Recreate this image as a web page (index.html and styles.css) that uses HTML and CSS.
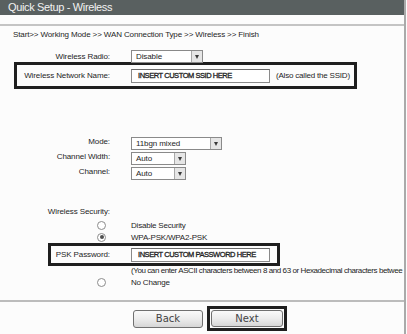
FILE: index.html
```html
<!DOCTYPE html>
<html>
<head>
<meta charset="utf-8">
<link rel="stylesheet" href="styles.css">
</head>
<body>
<div class="page">
  <div class="title">Quick Setup - Wireless</div>
  <div class="sep"></div>
  <p class="crumbs">Start&gt;&gt; Working Mode &gt;&gt; WAN Connection Type &gt;&gt; Wireless &gt;&gt; Finish</p>

  <div class="row r-radio">
    <span class="label">Wireless Radio:</span>
    <span class="select w72"><span class="val">Disable</span><span class="arrow"></span></span>
  </div>

  <div class="hl hl-ssid">
    <span class="label">Wireless Network Name:</span>
    <span class="input">INSERT CUSTOM SSID HERE</span>
    <span class="note">(Also called the SSID)</span>
  </div>

  <div class="row r-mode">
    <span class="label">Mode:</span>
    <span class="select w91"><span class="val">11bgn mixed</span><span class="arrow"></span></span>
  </div>
  <div class="row r-sel">
    <span class="label">Channel Width:</span>
    <span class="select w55"><span class="val">Auto</span><span class="arrow"></span></span>
  </div>
  <div class="row r-sel">
    <span class="label">Channel:</span>
    <span class="select w55"><span class="val">Auto</span><span class="arrow"></span></span>
  </div>

  <div class="row r-sec">
    <span class="label">Wireless Security:</span>
  </div>
  <div class="row r-opt first">
    <span class="label"><span class="radio"></span></span>
    <span class="text">Disable Security</span>
  </div>
  <div class="row r-opt">
    <span class="label"><span class="radio on"></span></span>
    <span class="text">WPA-PSK/WPA2-PSK</span>
  </div>

  <div class="hl hl-psk">
    <span class="label">PSK Password:</span>
    <span class="input">INSERT CUSTOM PASSWORD HERE</span>
  </div>
  <div class="row r-hint">
    <span class="label"></span>
    <span class="text hint">(You can enter ASCII characters between 8 and 63 or Hexadecimal characters betwee</span>
  </div>
  <div class="row r-opt nc">
    <span class="label"><span class="radio"></span></span>
    <span class="text">No Change</span>
  </div>

  <div class="rule"></div>

  <div class="buttons">
    <span class="btn back">Back</span>
    <span class="focus"><span class="btn next">Next</span></span>
  </div>
</div>
</body>
</html>
```
FILE: styles.css
```css
* { box-sizing: border-box; margin: 0; padding: 0; }
html, body { margin: 0; background: #fcfcfc; }
body {
  font-family: "Liberation Sans", Arial, sans-serif;
  font-size: 8px;
  color: #1e1e1e;
}
.page {
  width: 406px;
  height: 334px;
  border-right: 2px solid #aaaaaa;
  overflow: hidden;
  background: #fcfcfc;
}
.title {
  height: 15px;
  background: #596060;
  color: #f2f2f2;
  font-family: "Liberation Sans", Arial, sans-serif;
  font-size: 11px;
  line-height: 15px;
  padding-left: 8px;
  letter-spacing: -0.35px;
}
.sep {
  height: 11px;
  border-bottom: 2px solid #c4c4c4;
}
.crumbs {
  height: 18px;
  line-height: 18px;
  padding-left: 13px;
  white-space: nowrap;
  letter-spacing: -0.12px;
}
.row {
  display: flex;
  align-items: center;
  white-space: nowrap;
}
.label {
  display: inline-flex;
  justify-content: flex-end;
  align-items: center;
  width: 110px;
  flex: none;
  letter-spacing: -0.1px;
}
.row .label + * { margin-left: 21px; }
.r-radio { margin-top: 6px; height: 12px; }
.select {
  display: inline-flex;
  height: 13px;
  border: 1px solid #8a8a8a;
  background: #fff;
  align-items: stretch;
}
.select .val {
  flex: 1;
  padding-left: 4px;
  line-height: 11px;
  letter-spacing: -0.1px;
}
.select .arrow {
  width: 11px;
  border-left: 1px solid #a8a8a8;
  background: #e6e6e6;
  position: relative;
}
.select .arrow::after {
  content: "";
  position: absolute;
  left: 3px;
  top: 4px;
  border-left: 2.5px solid transparent;
  border-right: 2.5px solid transparent;
  border-top: 4px solid #3a3a3a;
}
.w72 { width: 72px; }
.w91 { width: 91px; }
.w55 { width: 55px; }

.hl {
  display: flex;
  align-items: center;
  border: 3px solid #1f1f1f;
  white-space: nowrap;
}
.hl-ssid {
  margin-left: 14px;
  width: 343px;
  height: 27px;
}
.hl-ssid .label { width: 93px; }
.hl-psk {
  margin-left: 48px;
  width: 232px;
  height: 23px;
}
.hl-psk .label { width: 59px; }
.hl .input { margin-left: 21px; }
.input {
  display: inline-block;
  width: 139px;
  height: 14px;
  border: 1px solid #8a8a8a;
  border-top-color: #6a6a6a;
  background: #fff;
  padding-left: 6px;
  line-height: 12px;
  font-size: 7.5px;
  letter-spacing: -0.45px;
  -webkit-text-stroke: 0.3px #1e1e1e;
  color: #1e1e1e;
}
.note {
  margin-left: 6px;
  letter-spacing: -0.2px;
}
.r-mode { margin-top: 48px; height: 15px; align-items: flex-start; }
.r-sel { height: 15px; align-items: flex-start; }
.r-sec { margin-top: 23px; height: 12px; }
.r-opt { height: 12px; }
.r-opt.first { margin-top: 2px; }
.r-opt .label { padding-right: 4px; }
.radio {
  display: inline-block;
  width: 9px;
  height: 9px;
  border-radius: 50%;
  border: 1px solid #8c8c8c;
  background: #fff;
  position: relative;
}
.radio.on::after {
  content: "";
  position: absolute;
  left: 1.5px;
  top: 1.5px;
  width: 4px;
  height: 4px;
  border-radius: 50%;
  background: #505050;
}
.text { letter-spacing: -0.2px; }
.hint { letter-spacing: -0.42px; }
.r-hint { height: 9px; line-height: 9px; }
.nc { margin-top: 1px; }
.rule {
  margin-top: 12px;
  border-top: 2px solid #bcbcbc;
}
.buttons {
  margin-top: 4px;
  display: flex;
  align-items: center;
  padding-left: 133px;
}
.btn {
  display: inline-flex;
  justify-content: center;
  align-items: center;
  border: 1px solid #707070;
  border-radius: 3px;
  background: linear-gradient(#fafafa, #ececec 50%, #d6d6d6);
  font-family: "DejaVu Sans", "Liberation Sans", sans-serif;
  font-size: 10px;
  color: #444;
}
.back { width: 70px; height: 18px; }
.focus {
  margin-left: 4px;
  display: inline-flex;
  border: 3px solid #1f1f1f;
  padding: 1px;
}
.next { width: 72px; height: 17px; }
```
